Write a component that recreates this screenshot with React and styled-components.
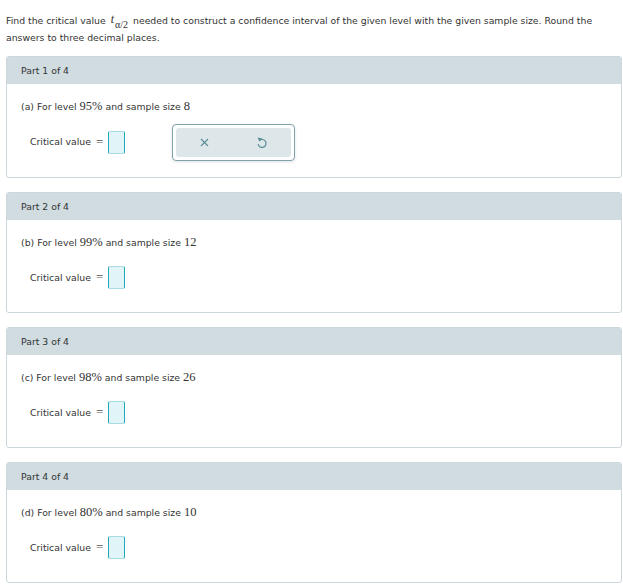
import { createGlobalStyle, styled } from "styled-components";

const Global = createGlobalStyle`
  body {
    margin: 0;
    background: #fff;
    font-family: "DejaVu Sans", Verdana, sans-serif;
    color: #333;
  }
`;

const Page = styled.div`
  padding: 12px 1px 0 6px;
  width: 623px;
  box-sizing: border-box;
`;

const Intro = styled.p`
  margin: 0;
  font-size: 9.3px;
  line-height: 17px;
  padding-right: 10px;
`;

const MathVar = styled.span`
  font-family: "Liberation Serif", "Times New Roman", serif;
  font-style: italic;
  font-size: 12px;
  line-height: 0;
  margin: 0 2px;
  vertical-align: 1px;
`;

const Sub = styled.sub`
  font-family: "Liberation Serif", "Times New Roman", serif;
  font-style: normal;
  font-size: 10px;
  vertical-align: -5px;
  line-height: 0;
  margin-left: 1px;
`;

const Num = styled.span`
  font-family: "Liberation Serif", "Times New Roman", serif;
  font-size: 12.5px;
  line-height: 0;
`;

const Stack = styled.div`
  margin-top: 10px;
  display: flex;
  flex-direction: column;
  gap: 14px;
`;

const Panel = styled.section`
  border: 1px solid #ccd7db;
  border-radius: 3px;
  overflow: hidden;
  font-size: 9.3px;
`;

const Header = styled.div`
  background: #d0dce0;
  height: 27px;
  display: flex;
  align-items: center;
  padding-left: 14px;
`;

const Body = styled.div`
  padding: 12px 14px 16px;
`;

const Question = styled.div`
  height: 20px;
  display: flex;
  align-items: center;
  gap: 3px;
`;

const Row = styled.div`
  margin-top: 6px;
  min-height: 38px;
  display: flex;
  align-items: center;
  padding-left: 9px;
`;

const Label = styled.span`
  margin-right: 5px;
`;

const Eq = styled.span`
  font-family: "Liberation Serif", serif;
  font-size: 13px;
  color: #555;
  margin-right: 5px;
`;

const Input = styled.div`
  width: 15px;
  height: 21px;
  background: #e1f4f8;
  border-left: 1px solid #1ea7b7;
  border-right: 1px solid #1ea7b7;
  border-top: 1px solid #a9dbe2;
  border-bottom: 1px solid #a9dbe2;
  border-radius: 2px;
  margin-top: 1px;
`;

const Tools = styled.div`
  margin-left: 47px;
  margin-top: 2px;
  width: 123px;
  height: 37px;
  border: 1px solid #7fa3aa;
  border-radius: 4px;
  padding: 3px;
  box-sizing: border-box;
  box-shadow: 0 1px 3px rgba(0, 0, 0, 0.12);
`;

const ToolInner = styled.div`
  background: #dde6e9;
  border-radius: 3px;
  height: 100%;
  display: grid;
  grid-template-columns: 1fr 1fr;
`;

const ToolButton = styled.div`
  display: flex;
  align-items: center;
  justify-content: center;
`;

const CloseIcon = () => (
  <svg width="9" height="9" viewBox="0 0 9 9">
    <path d="M1 1L8 8M8 1L1 8" stroke="#5b8c96" strokeWidth="1.1" fill="none" />
  </svg>
);

const UndoIcon = () => (
  <svg width="12" height="13" viewBox="0 0 12 13">
    <path
      d="M3.4 4.4A4 4 0 1 1 2.1 8.2"
      stroke="#5b8c96"
      strokeWidth="1.2"
      fill="none"
    />
    <path d="M1.5 1.6L3.4 5.4L6.2 2.6Z" fill="#5b8c96" />
  </svg>
);

const parts = [
  { letter: "a", level: "95%", size: "8", tools: true },
  { letter: "b", level: "99%", size: "12" },
  { letter: "c", level: "98%", size: "26" },
  { letter: "d", level: "80%", size: "10" },
];

export default function App() {
  return (
    <Page>
      <Global />
      <Intro>
        Find the critical value{" "}
        <MathVar>
          t<Sub>α/2</Sub>
        </MathVar>{" "}
        needed to construct a confidence interval of the given level with the
        given sample size. Round the answers to three decimal places.
      </Intro>
      <Stack>
        {parts.map((p, i) => (
          <Panel key={p.letter}>
            <Header>
              Part {i + 1} of {parts.length}
            </Header>
            <Body>
              <Question>
                ({p.letter}) For level <Num>{p.level}</Num> and sample size{" "}
                <Num>{p.size}</Num>
              </Question>
              <Row>
                <Label>Critical value</Label>
                <Eq>=</Eq>
                <Input />
                {p.tools && (
                  <Tools>
                    <ToolInner>
                      <ToolButton>
                        <CloseIcon />
                      </ToolButton>
                      <ToolButton>
                        <UndoIcon />
                      </ToolButton>
                    </ToolInner>
                  </Tools>
                )}
              </Row>
            </Body>
          </Panel>
        ))}
      </Stack>
    </Page>
  );
}
